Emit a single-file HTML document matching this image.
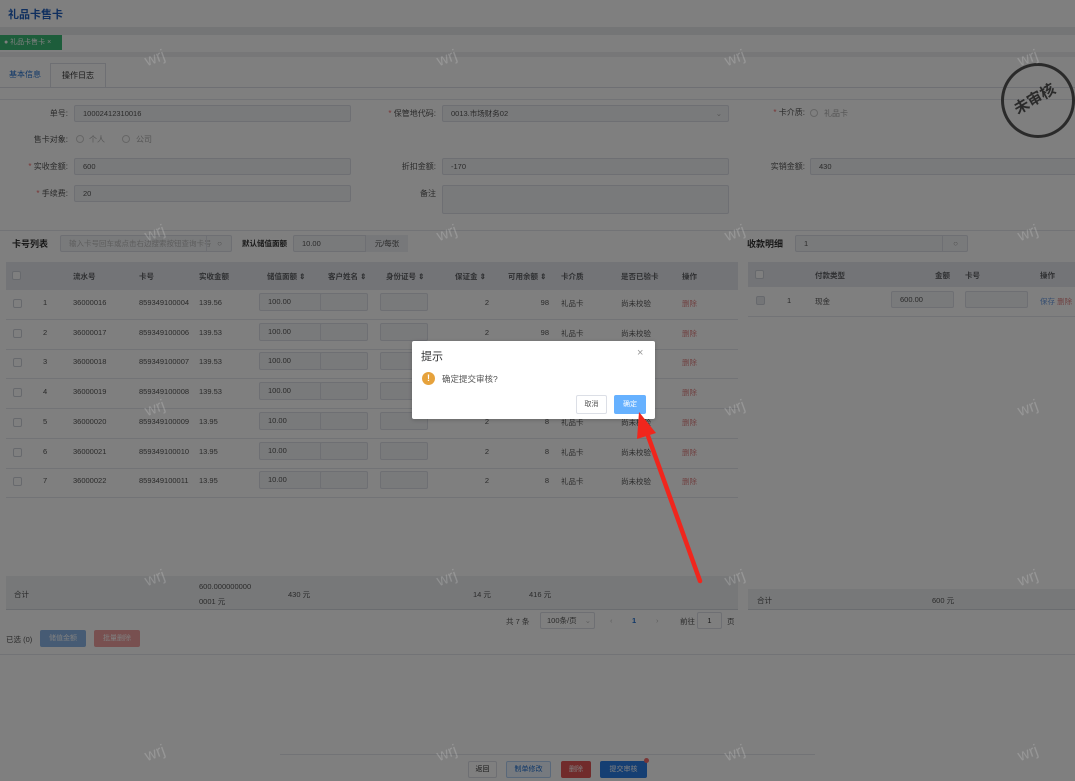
<!DOCTYPE html>
<html><head><meta charset="utf-8"><style>
*{box-sizing:border-box;margin:0;padding:0}
body{width:1075px;height:781px;overflow:hidden;position:relative;background:#fff;font-family:"Liberation Sans","Noto Sans CJK SC",sans-serif;font-size:8px;color:#333}
.a{position:absolute;white-space:nowrap}
.inp{position:absolute;background:#f3f4f7;border:1px solid #dcdfe6;border-radius:2px;height:17px;line-height:15px;padding-left:8px;font-size:7.5px;color:#555}
.lbl{position:absolute;text-align:right;font-size:8px;color:#555;line-height:17px}
.req{color:#f56c6c}
.hline{position:absolute;height:1px;background:#e4e7ed}
.th{position:absolute;font-size:7.5px;color:#606266;font-weight:bold}
.td{position:absolute;font-size:7.5px;color:#555}
.cb{position:absolute;width:9px;height:9px;border:1px solid #cfd3da;border-radius:2px;background:#fff}
.wm{position:absolute;color:rgba(255,255,255,.18);font-size:16px;transform:rotate(-20deg);z-index:20}
.btn{position:absolute;height:17px;line-height:17px;text-align:center;font-size:7px;border-radius:2px;color:#fff}
</style></head><body>
<!-- header -->
<div class="a" style="left:8px;top:6px;font-size:11px;font-weight:bold;color:#1f5fbf">礼品卡售卡</div>
<div class="a" style="left:0;top:27px;width:1075px;height:8px;background:#e9eaec"></div>
<div class="a" style="left:0;top:52px;width:1075px;height:5px;background:#eeeff1"></div>
<div class="a" style="left:0;top:35px;width:62px;height:15px;background:#3aba76;color:#fff;font-size:7px;line-height:15px;padding-left:4px">● 礼品卡售卡 ×</div>
<!-- tabs -->
<div class="a" style="left:0;top:63px;width:50px;height:24px;line-height:24px;text-align:center;color:#1f6fd0;font-size:8px">基本信息</div>
<div class="a" style="left:50px;top:63px;width:56px;height:25px;line-height:24px;text-align:center;border:1px solid #dcdfe6;border-bottom:none;background:#fff;font-size:8px;color:#333">操作日志</div>
<div class="hline" style="left:0;top:87px;width:1075px;background:#dcdfe6"></div>
<div class="hline" style="left:0;top:99px;width:1075px"></div>
<!-- form -->
<div class="lbl" style="left:0;width:68px;top:105px">单号:</div>
<div class="inp" style="left:74px;top:105px;width:277px">10002412310016</div>
<div class="lbl" style="left:340px;width:96px;top:105px"><span class="req">* </span>保管地代码:</div>
<div class="inp" style="left:442px;top:105px;width:287px">0013.市场财务02<span style="position:absolute;right:6px;color:#aaa">⌄</span></div>
<div class="lbl" style="left:720px;width:85px;top:104px"><span class="req">* </span>卡介质:</div>
<div class="a" style="left:810px;top:109px;width:8px;height:8px;border:1px solid #ccc;border-radius:50%"></div>
<div class="a" style="left:824px;top:108px;color:#aaa;font-size:8px">礼品卡</div>
<div class="lbl" style="left:0;width:68px;top:131px">售卡对象:</div>
<div class="a" style="left:76px;top:135px;width:8px;height:8px;border:1px solid #ccc;border-radius:50%"></div>
<div class="a" style="left:89px;top:134px;color:#aaa;font-size:8px">个人</div>
<div class="a" style="left:122px;top:135px;width:8px;height:8px;border:1px solid #ccc;border-radius:50%"></div>
<div class="a" style="left:136px;top:134px;color:#aaa;font-size:8px">公司</div>
<div class="lbl" style="left:0;width:68px;top:158px"><span class="req">* </span>实收金额:</div>
<div class="inp" style="left:74px;top:158px;width:277px">600</div>
<div class="lbl" style="left:340px;width:96px;top:158px">折扣金额:</div>
<div class="inp" style="left:442px;top:158px;width:287px">-170</div>
<div class="lbl" style="left:720px;width:85px;top:158px">实销金额:</div>
<div class="inp" style="left:810px;top:158px;width:270px">430</div>
<div class="lbl" style="left:0;width:68px;top:185px"><span class="req">* </span>手续费:</div>
<div class="inp" style="left:74px;top:185px;width:277px">20</div>
<div class="lbl" style="left:340px;width:96px;top:185px">备注</div>
<div class="inp" style="left:442px;top:185px;width:287px;height:29px"></div>
<!-- stamp -->
<div class="a" style="left:1001px;top:63px;width:74px;height:75px;border:3px solid #555;border-radius:50%"></div>
<div class="a" style="left:1012px;top:88px;font-size:15px;color:#555;transform:rotate(-30deg);font-weight:bold">未审核</div>
<div class="hline" style="left:0;top:230px;width:1075px"></div>
<!-- card list -->
<div class="a" style="left:12px;top:237px;font-size:9px;font-weight:bold;color:#333">卡号列表</div>
<div class="inp" style="left:60px;top:235px;width:172px;color:#bbb">输入卡号回车或点击右边搜索按钮查询卡号</div>
<div class="a" style="left:206px;top:235px;width:26px;height:17px;border-left:1px solid #dcdfe6;text-align:center;line-height:17px;color:#999">○</div>
<div class="a" style="left:242px;top:238px;font-size:7.5px;font-weight:bold;color:#333">默认储值面额</div>
<div class="inp" style="left:293px;top:235px;width:115px">10.00</div>
<div class="a" style="left:365px;top:235px;width:43px;height:17px;line-height:17px;text-align:center;border-left:1px solid #dcdfe6;background:#eef0f4;font-size:7.5px;color:#555">元/每张</div>
<div class="a" style="left:6px;top:262px;width:732px;height:28px;background:#e6e8ee"></div>
<div class="cb" style="left:12px;top:271px"></div>
<div class="th" style="left:73px;top:271px">流水号</div>
<div class="th" style="left:139px;top:271px">卡号</div>
<div class="th" style="left:199px;top:271px">实收金额</div>
<div class="th" style="left:267px;top:271px">储值面额 ⇕</div>
<div class="th" style="left:328px;top:271px">客户姓名 ⇕</div>
<div class="th" style="left:386px;top:271px">身份证号 ⇕</div>
<div class="th" style="left:455px;top:271px">保证金 ⇕</div>
<div class="th" style="left:508px;top:271px">可用余额 ⇕</div>
<div class="th" style="left:561px;top:271px">卡介质</div>
<div class="th" style="left:621px;top:271px">是否已验卡</div>
<div class="th" style="left:682px;top:271px">操作</div>

<div id="rows"></div>
<script>
var d=[["36000016","859349100004","139.56","100.00","98"],["36000017","859349100006","139.53","100.00","98"],["36000018","859349100007","139.53","100.00","98"],["36000019","859349100008","139.53","100.00","98"],["36000020","859349100009","13.95","10.00","8"],["36000021","859349100010","13.95","10.00","8"],["36000022","859349100011","13.95","10.00","8"]];
var h="";d.forEach(function(r,i){var y=290+i*29.7,c=y+8;
h+='<div class="cb" style="left:13px;top:'+(c+1)+'px"></div><div class="td" style="left:43px;top:'+c+'px">'+(i+1)+'</div><div class="td" style="left:73px;top:'+c+'px">'+r[0]+'</div><div class="td" style="left:139px;top:'+c+'px">'+r[1]+'</div><div class="td" style="left:199px;top:'+c+'px">'+r[2]+'</div><div class="inp" style="left:259px;top:'+(y+3)+'px;height:18px;width:63px">'+r[3]+'</div><div class="inp" style="left:320px;top:'+(y+3)+'px;height:18px;width:48px"></div><div class="inp" style="left:380px;top:'+(y+3)+'px;height:18px;width:48px"></div><div class="td" style="left:474px;width:15px;text-align:right;top:'+c+'px">2</div><div class="td" style="left:520px;width:29px;text-align:right;top:'+c+'px">'+r[4]+'</div><div class="td" style="left:561px;top:'+c+'px">礼品卡</div><div class="td" style="left:621px;top:'+c+'px">尚未校验</div><div class="td" style="left:682px;top:'+c+'px;color:#e08585">删除</div><div class="hline" style="left:6px;width:732px;top:'+(y+29)+'px"></div>';});
document.getElementById("rows").innerHTML=h;
</script>
<!-- sum -->
<div class="a" style="left:6px;top:576px;width:732px;height:34px;background:#eef0f3;border-bottom:1px solid #d5d8de"></div>
<div class="td" style="left:14px;top:589px">合计</div>
<div class="td" style="left:199px;top:582px">600.000000000</div>
<div class="td" style="left:199px;top:596px">0001 元</div>
<div class="td" style="left:288px;top:589px">430 元</div>
<div class="td" style="left:473px;top:589px">14 元</div>
<div class="td" style="left:529px;top:589px">416 元</div>
<div class="td" style="left:506px;top:616px">共 7 条</div>
<div class="a" style="left:540px;top:612px;width:55px;height:17px;border:1px solid #dcdfe6;border-radius:2px;font-size:7.5px;line-height:15px;padding-left:6px;color:#555">100条/页 <span style="color:#bbb;margin-left:6px">⌄</span></div>
<div class="td" style="left:610px;top:616px;color:#bbb">‹</div>
<div class="td" style="left:632px;top:616px;color:#1f6fd0;font-weight:bold">1</div>
<div class="td" style="left:656px;top:616px;color:#bbb">›</div>
<div class="td" style="left:680px;top:616px">前往</div>
<div class="a" style="left:697px;top:612px;width:25px;height:17px;border:1px solid #dcdfe6;border-radius:2px;text-align:center;line-height:15px;font-size:7.5px">1</div>
<div class="td" style="left:727px;top:616px">页</div>
<div class="td" style="left:6px;top:634px">已选 (0)</div>
<div class="btn" style="left:40px;top:630px;width:46px;background:#8cb6e8">储值金额</div>
<div class="btn" style="left:94px;top:630px;width:46px;background:#f0a0a0">批量删除</div>
<div class="hline" style="left:0;top:654px;width:1075px"></div>
<!-- right panel -->
<div class="a" style="left:747px;top:237px;font-size:9px;font-weight:bold;color:#333">收款明细</div>
<div class="inp" style="left:795px;top:235px;width:173px">1</div>
<div class="a" style="left:942px;top:235px;width:26px;height:17px;border-left:1px solid #dcdfe6;text-align:center;line-height:17px;color:#999">○</div>
<div class="a" style="left:748px;top:262px;width:327px;height:25px;background:#e6e8ee"></div>
<div class="cb" style="left:755px;top:270px"></div>
<div class="th" style="left:815px;top:270px">付款类型</div>
<div class="th" style="left:935px;top:270px">金额</div>
<div class="th" style="left:965px;top:270px">卡号</div>
<div class="th" style="left:1040px;top:270px">操作</div>
<div class="cb" style="left:756px;top:296px;background:#e8eaee"></div>
<div class="td" style="left:787px;top:296px">1</div>
<div class="td" style="left:815px;top:296px">现金</div>
<div class="inp" style="left:891px;top:291px;width:63px">600.00</div>
<div class="inp" style="left:965px;top:291px;width:63px"></div>
<div class="td" style="left:1040px;top:296px;color:#6a9be0">保存 <span style="color:#e08585">删除</span></div>
<div class="hline" style="left:748px;top:316px;width:327px"></div>
<div class="a" style="left:748px;top:589px;width:327px;height:21px;background:#eef0f3;border-bottom:1px solid #d5d8de"></div>
<div class="td" style="left:757px;top:595px">合计</div>
<div class="td" style="left:932px;top:595px">600 元</div>
<!-- bottom -->
<div class="hline" style="left:280px;top:754px;width:535px"></div>
<div class="btn" style="left:468px;top:761px;width:29px;border:1px solid #dcdfe6;color:#333;background:#fff;line-height:15px">返回</div>
<div class="btn" style="left:506px;top:761px;width:45px;border:1px solid #b3d1f5;color:#1f6fd0;background:#ecf5ff;line-height:15px">制单修改</div>
<div class="btn" style="left:561px;top:761px;width:30px;background:#e25656">删除</div>
<div class="btn" style="left:600px;top:761px;width:47px;background:#2a7ee6">提交审核</div>
<div class="a" style="left:644px;top:758px;width:5px;height:5px;border-radius:50%;background:#f56c6c"></div>
<!-- overlay -->
<div class="a" style="left:0;top:0;width:1075px;height:781px;background:rgba(0,0,0,.5);z-index:10"></div>
<div id="wm"></div>
<script>
var w="";[145,437,725,1018].forEach(function(x){[50,225,400,570,745].forEach(function(y){w+='<div class="wm" style="left:'+x+'px;top:'+y+'px">wrj</div>';});});
document.getElementById("wm").innerHTML=w;
</script>
<!-- dialog -->
<div class="a" style="left:412px;top:341px;width:243px;height:78px;background:#fff;border-radius:2px;z-index:30;box-shadow:0 1px 4px rgba(0,0,0,.2)">
<div class="a" style="left:9px;top:7px;font-size:11px;color:#303133">提示</div>
<div class="a" style="left:225px;top:6px;font-size:11px;color:#999">×</div>
<div class="a" style="left:10px;top:31px;width:13px;height:13px;border-radius:50%;background:#e6a23c;color:#fff;font-size:9px;font-weight:bold;text-align:center;line-height:13px">!</div>
<div class="a" style="left:30px;top:32px;font-size:8.5px;color:#555">确定提交审核?</div>
<div class="a" style="left:164px;top:54px;width:31px;height:19px;border:1px solid #dcdfe6;border-radius:2px;text-align:center;line-height:17px;font-size:7px;color:#555">取消</div>
<div class="a" style="left:202px;top:54px;width:32px;height:19px;background:#66b1ff;border-radius:2px;text-align:center;line-height:19px;font-size:7px;color:#fff">确定</div>
</div>
<svg class="a" style="left:0;top:0;z-index:40" width="1075" height="781">
<line x1="700" y1="581" x2="647" y2="433" stroke="#f0261d" stroke-width="4.5" stroke-linecap="round"/>
<polygon points="639,412 656,433 637,439" fill="#f0261d"/>
</svg>
</body></html>
